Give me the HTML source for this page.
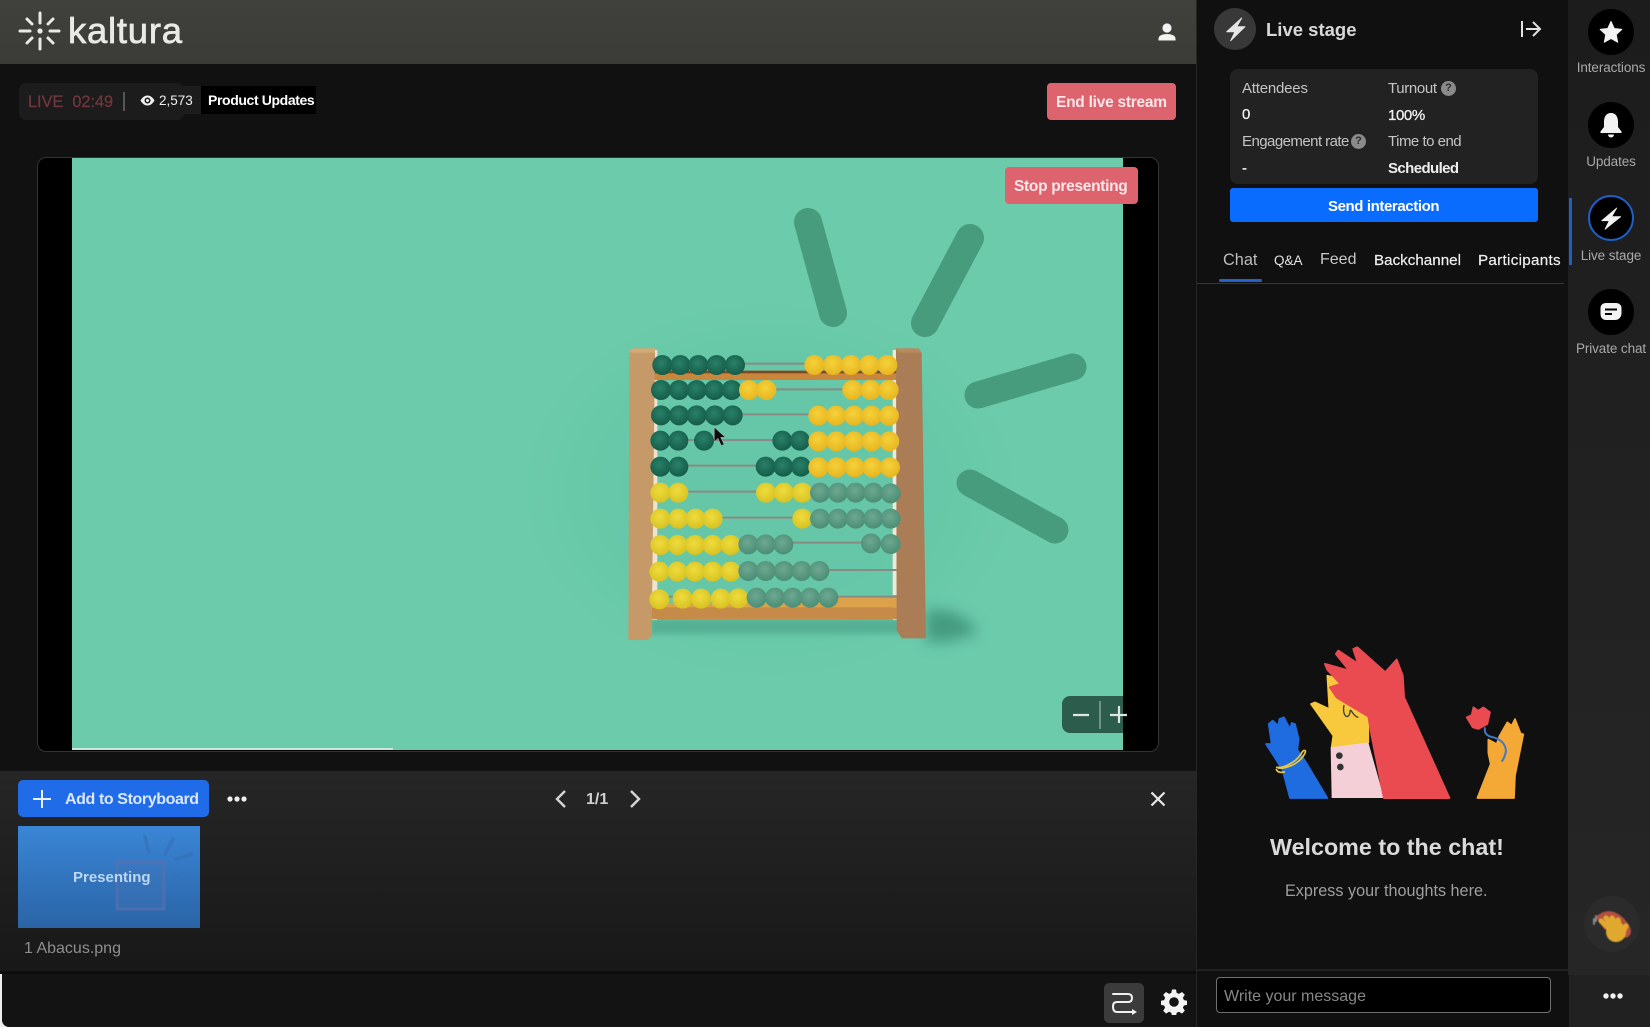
<!DOCTYPE html>
<html lang="en"><head><meta charset="utf-8"><title>Kaltura Live</title>
<style>
html,body{margin:0;padding:0;background:#111;}
#app{position:relative;width:1650px;height:1027px;overflow:hidden;background:#111;font-family:"Liberation Sans",sans-serif;color:#fff;}
#app div,#app span.t,#app svg{position:absolute;}
.t{white-space:nowrap;line-height:1;}
.b{font-weight:bold;}
.lbl{color:#c4c4c4;font-size:15px;letter-spacing:-.35px;}
.val{color:#eee;font-size:15px;-webkit-text-stroke:.3px #eee;}
.tab{font-size:15.2px;color:#eee;-webkit-text-stroke:.2px #eee;}
.rail{color:#a9a9a9;font-size:13.5px;letter-spacing:-.1px;width:82px;left:1570px;text-align:center;}
.rc{background:#000;border-radius:50%;width:46px;height:46px;left:1588px;}
.q{background:#8a8a8a;border-radius:50%;width:15px;height:15px;color:#2a2a2a;font-size:11px;line-height:15px;text-align:center;font-weight:bold;}
.bd circle{r:30px;}
</style></head><body><div id="app">

<!-- header -->
<div style="left:0;top:0;width:1196px;height:64px;background:linear-gradient(#40403c,#3b3b38);"></div>
<svg style="left:16px;top:8px" width="48" height="46" viewBox="0 0 48 46" fill="none" stroke="#e9e9e5" stroke-width="3" stroke-linecap="round">
<path d="M24 5V15M24 31V41M4 23H14M34 23H43M11 11l5 5M37 11l-5 5M11 35l5-5M37 35l-5-5"/><circle cx="24" cy="23" r="2.600" fill="#e9e9e5" stroke="none"/></svg>
<span class="t" style="left:68px;top:13px;font-size:36.5px;color:#e9e9e5;letter-spacing:.75px;-webkit-text-stroke:.7px #e9e9e5;">kaltura</span>
<svg style="left:1156px;top:21px" width="22" height="22" viewBox="0 0 22 22" fill="#f2f2f2"><circle cx="11" cy="7" r="4.600"/><path d="M2.500 19.500v-2C2.500 14.500 7 13 11 13s8.500 1.500 8.500 4.500v2z"/></svg>

<!-- live bar -->
<div style="left:19px;top:83px;width:165px;height:37px;background:#1c1c1c;border-radius:7px;"></div>
<div style="left:180px;top:86px;width:22px;height:28px;background:#1c1c1c;"></div>
<span class="t" style="left:28px;top:94px;font-size:16.300px;color:#74373e;-webkit-text-stroke:.2px #74373e;">LIVE&nbsp; 02:49</span>
<div style="left:123px;top:92px;width:2px;height:19px;background:#555;"></div>
<svg style="left:140px;top:94px" width="15" height="13" viewBox="0 0 15 13"><path d="M.5 6.500C2.500 3 5 1.500 7.500 1.500S12.500 3 14.500 6.500C12.500 10 10 11.500 7.500 11.500S2.500 10 .5 6.500z" fill="#eee"/><circle cx="7.500" cy="6.500" r="3" fill="#1c1c1c"/><circle cx="7.500" cy="6.500" r="1.500" fill="#eee"/></svg>
<span class="t" style="left:159px;top:94px;font-size:13.500px;color:#eee;">2,573</span>
<div style="left:201px;top:86px;width:115px;height:28px;background:#000;"></div>
<span class="t b" style="left:208px;top:93px;font-size:14px;letter-spacing:-.38px;">Product Updates</span>
<div style="left:1047px;top:83px;width:129px;height:37px;background:#dd636e;border-radius:4px;"></div>
<span class="t b" style="left:1056px;top:95px;font-size:15.500px;letter-spacing:-.25px;color:#fbe6e8;">End live stream</span>

<!-- video -->
<div style="left:37px;top:157px;width:1120px;height:593px;background:#000;border:1px solid #333;border-radius:9px;"></div>
<div style="left:72px;top:158px;width:1051px;height:592px;background:#6bcbab;overflow:hidden;">
<div style="left:0;bottom:0;width:321px;height:2px;background:#c8e6da;"></div>
</div>
<svg style="left:72px;top:158px" width="1051" height="592" viewBox="72 158 1051 592">
<defs>
<radialGradient id="gd" cx=".45" cy=".4" r=".65"><stop offset="0" stop-color="#2a8068"/><stop offset="1" stop-color="#135a47"/></radialGradient>
<radialGradient id="gl" cx=".45" cy=".4" r=".65"><stop offset="0" stop-color="#6ea891"/><stop offset="1" stop-color="#488b73"/></radialGradient>
<radialGradient id="yg" cx=".45" cy=".4" r=".65"><stop offset="0" stop-color="#f5d23a"/><stop offset="1" stop-color="#e6b31f"/></radialGradient>
<radialGradient id="yl" cx=".45" cy=".4" r=".65"><stop offset="0" stop-color="#efdc3c"/><stop offset="1" stop-color="#d6c021"/></radialGradient>
<radialGradient id="halo" cx=".5" cy=".5" r=".5"><stop offset=".55" stop-color="#65c7a7"/><stop offset="1" stop-color="#65c7a7" stop-opacity="0"/></radialGradient>
<filter id="bl" x="-30%" y="-60%" width="160%" height="220%"><feGaussianBlur stdDeviation="3"/></filter>
<filter id="bl2" x="-60%" y="-60%" width="220%" height="220%"><feGaussianBlur stdDeviation="7"/></filter>
<filter id="sm" x="-5%" y="-5%" width="110%" height="110%"><feGaussianBlur stdDeviation=".45"/></filter>
</defs>
<ellipse cx="770" cy="490" rx="250" ry="190" fill="url(#halo)"/>
<g stroke="#479c7d" stroke-linecap="round" fill="none">
<path d="M808 222L833 313" stroke-width="28"/>
<path d="M970 238L925 323" stroke-width="28"/>
<path d="M1073 367L978 395" stroke-width="27"/>
<path d="M970 483L1055 530" stroke-width="27"/>
</g>
<!-- shadows -->
<path d="M650 619H905V634H650z" fill="#55b093" filter="url(#bl)"/>
<path d="M926 610H945Q980 622 975 634L945 642H926z" fill="#459a7f" filter="url(#bl2)"/>
<g transform="translate(600 330) scale(.33333)" filter="url(#sm)">
<!-- inner strips -->
<rect x="150" y="60" width="22" height="810" fill="#efe3cf"/>
<rect x="878" y="60" width="20" height="810" fill="#efe8d8"/>
<!-- bars -->
<rect x="155" y="122" width="735" height="28" fill="#c9873c"/>
<rect x="155" y="122" width="735" height="8" fill="#7d4a22"/>
<rect x="650" y="795" width="245" height="35" fill="#dba24c"/>
<rect x="150" y="820" width="745" height="12" fill="#dba24c"/>
<rect x="150" y="832" width="745" height="36" fill="#c68b48"/>
<!-- rods -->
<g stroke="#8a8a84" stroke-width="6">
<path d="M165 101H890M165 178H890M165 253H890M165 330H890M165 407H890M165 485H890M165 563H890M165 638H890M165 720H895M165 800H895"/>
</g>
<!-- posts -->
<path d="M88 62L100 55H165V68L155 920L140 930H85z" fill="#c59a68"/>
<path d="M88 62L100 55H165V68H90z" fill="#d4ab76"/>
<path d="M888 55H955L965 68L978 925H905L890 900z" fill="#ab7d56"/>
<path d="M888 55H955L965 68H895z" fill="#b98a5e"/>
<!-- beads -->
<g class="bd" fill="url(#gd)">
<circle cx="187" cy="105" r="28"/><circle cx="241" cy="105" r="28"/><circle cx="295" cy="105" r="28"/><circle cx="350" cy="105" r="28"/><circle cx="405" cy="105" r="28"/>
<circle cx="183" cy="180" r="28"/><circle cx="237" cy="180" r="28"/><circle cx="290" cy="180" r="28"/><circle cx="343" cy="180" r="28"/><circle cx="395" cy="180" r="28"/>
<circle cx="183" cy="256" r="28"/><circle cx="237" cy="256" r="28"/><circle cx="290" cy="256" r="28"/><circle cx="345" cy="256" r="28"/><circle cx="398" cy="256" r="28"/>
<circle cx="181" cy="332" r="28"/><circle cx="235" cy="332" r="28"/><circle cx="312" cy="332" r="28"/><circle cx="547" cy="332" r="28"/><circle cx="600" cy="332" r="28"/>
<circle cx="181" cy="410" r="28"/><circle cx="235" cy="410" r="28"/><circle cx="497" cy="410" r="28"/><circle cx="550" cy="410" r="28"/><circle cx="603" cy="410" r="28"/>
</g>
<g class="bd" fill="url(#yg)">
<circle cx="643" cy="105" r="28"/><circle cx="700" cy="105" r="28"/><circle cx="753" cy="105" r="28"/><circle cx="808" cy="105" r="28"/><circle cx="862" cy="105" r="28"/>
<circle cx="447" cy="180" r="28"/><circle cx="499" cy="180" r="28"/><circle cx="757" cy="180" r="28"/><circle cx="812" cy="180" r="28"/><circle cx="866" cy="180" r="28"/>
<circle cx="655" cy="257" r="28"/><circle cx="708" cy="257" r="28"/><circle cx="762" cy="257" r="28"/><circle cx="815" cy="257" r="28"/><circle cx="867" cy="257" r="28"/>
<circle cx="655" cy="334" r="28"/><circle cx="709" cy="334" r="28"/><circle cx="762" cy="334" r="28"/><circle cx="815" cy="334" r="28"/><circle cx="868" cy="334" r="28"/>
<circle cx="655" cy="412" r="28"/><circle cx="710" cy="412" r="28"/><circle cx="764" cy="412" r="28"/><circle cx="817" cy="412" r="28"/><circle cx="870" cy="412" r="28"/>
</g>
<g class="bd" fill="url(#yl)">
<circle cx="181" cy="488" r="28"/><circle cx="235" cy="488" r="28"/><circle cx="498" cy="488" r="28"/><circle cx="552" cy="488" r="28"/><circle cx="607" cy="488" r="28"/>
<circle cx="181" cy="566" r="28"/><circle cx="235" cy="566" r="28"/><circle cx="287" cy="566" r="28"/><circle cx="338" cy="566" r="28"/><circle cx="607" cy="566" r="28"/>
<circle cx="181" cy="645" r="28"/><circle cx="233" cy="645" r="28"/><circle cx="285" cy="645" r="28"/><circle cx="338" cy="645" r="28"/><circle cx="392" cy="645" r="28"/>
<circle cx="178" cy="725" r="28"/><circle cx="232" cy="725" r="28"/><circle cx="285" cy="725" r="28"/><circle cx="338" cy="725" r="28"/><circle cx="392" cy="725" r="28"/>
<circle cx="178" cy="808" r="28"/><circle cx="248" cy="806" r="28"/><circle cx="303" cy="806" r="28"/><circle cx="362" cy="806" r="28"/><circle cx="415" cy="805" r="28"/>
</g>
<g class="bd" fill="url(#gl)">
<circle cx="660" cy="488" r="28"/><circle cx="714" cy="488" r="28"/><circle cx="767" cy="488" r="28"/><circle cx="820" cy="488" r="28"/><circle cx="872" cy="490" r="28"/>
<circle cx="660" cy="566" r="28"/><circle cx="714" cy="566" r="28"/><circle cx="767" cy="566" r="28"/><circle cx="820" cy="566" r="28"/><circle cx="872" cy="566" r="28"/>
<circle cx="445" cy="643" r="28"/><circle cx="497" cy="643" r="28"/><circle cx="550" cy="643" r="28"/><circle cx="813" cy="640" r="28"/><circle cx="872" cy="642" r="28"/>
<circle cx="445" cy="723" r="28"/><circle cx="497" cy="723" r="28"/><circle cx="552" cy="723" r="28"/><circle cx="605" cy="723" r="28"/><circle cx="658" cy="723" r="28"/>
<circle cx="470" cy="803" r="28"/><circle cx="525" cy="803" r="28"/><circle cx="578" cy="803" r="28"/><circle cx="630" cy="803" r="28"/><circle cx="685" cy="803" r="28"/>
</g>
<!-- cursor -->
<path d="M343 292V335L354 325L364 347L372 343L362 322H376z" fill="#111" stroke="#ddd" stroke-width="1"/>
</g>
</svg>

<!-- stop presenting -->
<div style="left:1005px;top:167px;width:133px;height:37px;background:#dd636e;border-radius:4px;"></div>
<span class="t b" style="left:1014px;top:179px;font-size:15.500px;letter-spacing:-.3px;color:#fbe6e8;">Stop presenting</span>

<!-- zoom control -->
<div style="left:1062px;top:696px;width:61px;height:37px;background:#2c5c4b;border-radius:8px 0 0 8px;"></div>
<svg style="left:1062px;top:696px" width="72" height="37" viewBox="0 0 72 37" fill="none" stroke="#dfe5e2" stroke-width="2.200"><path d="M11 19H27M48 19H65M57 10V27"/><path d="M38 5V33" stroke="#84a598" stroke-width="1.500"/></svg>

<!-- storyboard -->
<div style="left:0;top:771px;width:1196px;height:200px;background:linear-gradient(#262626,#181818);"></div>
<div style="left:18px;top:780px;width:191px;height:37px;background:#1f6be8;border-radius:5px;"></div>
<svg style="left:32px;top:789px" width="20" height="20" viewBox="0 0 20 20" stroke="#eaf1fd" stroke-width="2" fill="none"><path d="M10 1V19M1 10H19"/></svg>
<span class="t b" style="left:65px;top:792px;font-size:16px;color:#dbe7fb;letter-spacing:-.4px;">Add to Storyboard</span>
<svg style="left:226px;top:794px" width="22" height="10" viewBox="0 0 22 10" fill="#eee"><circle cx="4" cy="5" r="2.600"/><circle cx="11" cy="5" r="2.600"/><circle cx="18" cy="5" r="2.600"/></svg>
<svg style="left:552px;top:789px" width="18" height="20" viewBox="0 0 18 20" fill="none" stroke="#d5d5d5" stroke-width="2.400"><path d="M13 2L5 10L13 18"/></svg>
<span class="t b" style="left:586px;top:792px;font-size:16px;color:#d0d0d0;">1/1</span>
<svg style="left:626px;top:789px" width="18" height="20" viewBox="0 0 18 20" fill="none" stroke="#d5d5d5" stroke-width="2.400"><path d="M5 2L13 10L5 18"/></svg>
<svg style="left:1150px;top:791px" width="16" height="16" viewBox="0 0 16 16" stroke="#e8e8e8" stroke-width="2.200" fill="none"><path d="M1.500 1.500L14.500 14.500M14.500 1.500L1.500 14.500"/></svg>
<div style="left:18px;top:826px;width:182px;height:102px;background:linear-gradient(#3a86d6,#2a64a6);"></div>
<svg style="left:18px;top:826px" width="182" height="102" viewBox="0 0 182 102" fill="none" stroke="#3672b8" stroke-width="3.500" stroke-linecap="round" opacity=".7">
<path d="M127 11L131 27M155 13L147 28M174 28L158 33M156 49L170 59"/>
<rect x="99" y="36" width="47" height="47" stroke="#5a6fb0" fill="#4674b4" fill-opacity=".45" stroke-width="3"/></svg>
<span class="t b" style="left:73px;top:870px;font-size:15px;color:#bcd7ef;">Presenting</span>
<span class="t" style="left:24px;top:941px;font-size:16px;color:#8e8e8e;">1 Abacus.png</span>

<!-- footer -->
<div style="left:0;top:971px;width:1196px;height:3px;background:#0d0d0d;"></div>
<div style="left:0;top:974px;width:10px;height:53px;background:#eee;"></div>
<div style="left:1.500px;top:974px;width:1196px;height:53px;background:#131313;border-bottom-left-radius:7px;"></div>
<div style="left:1104px;top:983px;width:40px;height:40px;background:#3b3b3b;border-radius:5px;"></div>
<svg style="left:1110px;top:989px" width="28" height="28" viewBox="0 0 28 28" fill="none" stroke="#f0f0f0" stroke-width="2" stroke-linecap="round"><path d="M3 5H18Q22 5 22 9Q22 13 18 13H7Q3 13 3 17.500Q3 23 7 23H23"/><path d="M22 20L27 23L22 26z" fill="#f0f0f0" stroke="none"/></svg>
<svg style="left:1161px;top:989px" width="26" height="26" viewBox="0 0 26 26"><path d="M11 0.500h4l.7 3.400 2.300 1 3-1.900 2.800 2.800-1.900 3 1 2.300 3.400.7v4l-3.400.7-1 2.300 1.900 3-2.800 2.800-3-1.900-2.300 1-.7 3.400h-4l-.7-3.400-2.300-1-3 1.900-2.800-2.800 1.900-3-1-2.300-3.400-.7v-4l3.400-.7 1-2.300-1.900-3 2.800-2.800 3 1.900 2.300-1z" fill="#f4f4f4"/><circle cx="13" cy="13" r="4.800" fill="#131313"/></svg>

<!-- right panel -->
<div style="left:1196px;top:0;width:372px;height:1027px;background:#101010;border-left:1px solid #262626;box-sizing:border-box;"></div>
<div style="left:1214px;top:8px;width:42px;height:42px;border-radius:50%;background:#383838;"></div>
<svg style="left:1222px;top:15px" width="26" height="28" viewBox="0 0 26 28" fill="#e6e6e6"><path d="M19.700 3L4.700 16.700H13L8.700 25.700L23 11.700H14.700z" stroke="#e6e6e6" stroke-width="1" stroke-linejoin="round"/></svg>
<span class="t b" style="left:1266px;top:21px;font-size:18.500px;color:#d8d8d8;">Live stage</span>
<svg style="left:1520px;top:19px" width="22" height="20" viewBox="0 0 22 20" fill="none" stroke="#e2e2e2" stroke-width="2"><path d="M2 2V18M6 10H20M13 3L20 10L13 17"/></svg>

<div style="left:1230px;top:69px;width:308px;height:115px;background:#222;border-radius:8px;"></div>
<span class="t lbl" style="left:1242px;top:81px;letter-spacing:-.2px;">Attendees</span>
<span class="t lbl" style="left:1388px;top:81px;">Turnout</span>
<div class="q" style="left:1441px;top:81px;">?</div>
<span class="t val" style="left:1242px;top:107px;">0</span>
<span class="t val" style="left:1388px;top:108px;letter-spacing:-.4px;">100%</span>
<span class="t lbl" style="left:1242px;top:134px;letter-spacing:-.55px;">Engagement rate</span>
<div class="q" style="left:1351px;top:134px;">?</div>
<span class="t lbl" style="left:1388px;top:134px;letter-spacing:-.5px;">Time to end</span>
<span class="t val" style="left:1242px;top:161px;">-</span>
<span class="t val b" style="left:1388px;top:161px;letter-spacing:-.6px;-webkit-text-stroke:0;">Scheduled</span>

<div style="left:1230px;top:188px;width:308px;height:34px;background:#0a6cff;border-radius:3px;"></div>
<span class="t b" style="left:1328px;top:199px;font-size:15px;letter-spacing:-.4px;">Send interaction</span>

<span class="t" style="left:1223px;top:252px;font-size:16.300px;color:#bdbdbd;">Chat</span>
<span class="t" style="left:1274px;top:254px;font-size:13.500px;color:#e4e4e4;">Q&amp;A</span>
<span class="t" style="left:1320px;top:252px;font-size:16px;color:#c8c8c8;">Feed</span>
<span class="t tab" style="left:1374px;top:253px;">Backchannel</span>
<span class="t tab" style="left:1478px;top:253px;letter-spacing:.3px;">Participants</span>
<div style="left:1219px;top:279px;width:43px;height:3px;background:#2461c9;border-radius:2px;"></div>
<div style="left:1197px;top:283px;width:367px;height:1px;background:#363636;"></div>

<!-- chat illustration -->
<svg style="left:1240px;top:629px" width="330" height="180" viewBox="0 0 990 540" stroke-linejoin="round">
<path d="M150 507H262L195 395L172 362L176 330L165 285L155 282L150 300L132 265L118 270L115 290L98 275L86 285L95 345L78 345L110 395L128 425z" fill="#1f6be0" stroke="#1f6be0" stroke-width="5"/>
<path d="M110 415C130 425 180 405 195 372C200 362 190 362 186 370C170 400 130 418 110 415z" fill="none" stroke="#e8c840" stroke-width="5"/>
<path d="M108 420Q115 435 135 428" fill="none" stroke="#e8c840" stroke-width="5"/>
<path d="M213 225L225 220L268 240L262 140L300 150L340 210L385 270L385 340L275 355L280 320z" fill="#f8c93c" stroke="#f8c93c" stroke-width="5"/>
<path d="M312 228C305 260 325 275 330 250C330 230 340 265 355 265" fill="none" stroke="#3c3c3c" stroke-width="4"/>
<path d="M272 355L385 340L432 507H275z" fill="#f4cfd8"/>
<circle cx="298" cy="380" r="10" fill="#333"/><circle cx="301" cy="414" r="10" fill="#333"/>
<path d="M432 507H628L492 205L488 140L470 92L436 130L352 55L340 60L355 105L295 65L288 75L328 125L255 105L262 122L302 165L270 175L290 205L385 262L395 320z" fill="#e94b50" stroke="#e94b50" stroke-width="6"/>
<path d="M712 507H822L825 440L850 316L842 314L825 270L815 290L802 280L778 322L770 345L745 332L745 372L752 405z" fill="#f4a836" stroke="#f4a836" stroke-width="5"/>
<path d="M735 295Q730 320 760 325Q795 335 798 365Q795 385 785 398" fill="none" stroke="#3f78c8" stroke-width="6"/>
<path d="M700 235L715 245L730 235L750 250L742 285L715 300L698 295L680 265L695 258z" fill="#e94b50" stroke="#e94b50" stroke-width="5"/>
</svg>
<span class="t b" style="left:1270px;top:836px;font-size:23.300px;color:#dadada;">Welcome to the chat!</span>
<span class="t" style="left:1285px;top:883px;font-size:16.200px;color:#9e9e9e;">Express your thoughts here.</span>

<div style="left:1197px;top:969px;width:372px;height:2px;background:#222;"></div>
<div style="left:1216px;top:977px;width:335px;height:36px;background:#000;border:1px solid #707070;border-radius:4px;box-sizing:border-box;"></div>
<span class="t" style="left:1224px;top:989px;font-size:16px;color:#878787;">Write your message</span>

<!-- right rail -->
<div style="left:1568px;top:0;width:82px;height:975px;background:linear-gradient(#1c1c1c,#262626);"></div>
<div style="left:1569px;top:975px;width:81px;height:52px;background:#212121;"></div>
<div style="left:1569px;top:198px;width:3px;height:67px;background:#1d5fc4;"></div>

<div class="rc" style="top:9px;"></div>
<svg style="left:1599px;top:20px" width="24" height="24" viewBox="0 0 24 24" fill="#f2f2f2"><path d="M12 1.500L15.200 8.500L22.800 9.400L17.200 14.600L18.700 22.200L12 18.400L5.300 22.200L6.800 14.600L1.200 9.400L8.800 8.500z" stroke="#f2f2f2" stroke-linejoin="round"/></svg>
<span class="t rail" style="top:61px;">Interactions</span>

<div class="rc" style="top:102px;"></div>
<svg style="left:1599px;top:112px" width="24" height="26" viewBox="0 0 24 26" fill="#f2f2f2"><path d="M12 1C7 1 5 5 5 10V15L1.500 19.500V21H22.500V19.500L19 15V10C19 5 17 1 12 1z"/><path d="M9 22.500H15A3 3 0 0 1 9 22.500z"/></svg>
<span class="t rail" style="top:155px;">Updates</span>

<div class="rc" style="top:195px;box-sizing:border-box;border:2px solid #1d5fc4;"></div>
<svg style="left:1600px;top:206px" width="22" height="26" viewBox="0 0 22 26" fill="#f2f2f2"><path d="M16.700 2L1.700 14.700H9.300L5 23.300L20.700 10.700H11.700z" stroke="#f2f2f2" stroke-width=".8" stroke-linejoin="round"/></svg>
<span class="t rail" style="top:249px;">Live stage</span>

<div class="rc" style="top:289px;"></div>
<svg style="left:1600px;top:302px" width="22" height="20" viewBox="0 0 22 20"><path d="M6 1H16C19 1 21.500 3 21.500 6V11C21.500 15 19 18 15 18H6C3 18 .5 16 .5 12V6C.5 3 3 1 6 1z" fill="#f2f2f2"/><path d="M5 7.500H17M5 12H12" stroke="#000" stroke-width="2"/></svg>
<span class="t rail" style="top:342px;">Private chat</span>

<div style="left:1584px;top:896px;width:56px;height:56px;border-radius:50%;background:#2b2b2b;"></div>
<svg style="left:1590px;top:905px" width="44" height="42" viewBox="0 0 44 42" stroke-linecap="round" stroke-linejoin="round">
<defs><filter id="cl"><feGaussianBlur stdDeviation=".6"/></filter></defs>
<g filter="url(#cl)">
<path d="M4 14V19M6 11V16" stroke="#8a8a8a" stroke-width="2"/>
<path d="M6 12Q14 4 24 7Q34 11 40 22Q43 30 36 33L14 24z" fill="#b4503f"/>
<g stroke="#e0a92e" stroke-width="5" fill="none"><path d="M22 26L11 16M24 23L16 13M27 22L22 13M30 23L28 15M33 27L36 21"/></g>
<circle cx="26" cy="27" r="10" fill="#e0a92e"/>
</g></svg>
<svg style="left:1602px;top:992px" width="22" height="8" viewBox="0 0 22 8" fill="#f2f2f2"><circle cx="4" cy="4" r="2.700"/><circle cx="11" cy="4" r="2.700"/><circle cx="18" cy="4" r="2.700"/></svg>

</div></body></html>
